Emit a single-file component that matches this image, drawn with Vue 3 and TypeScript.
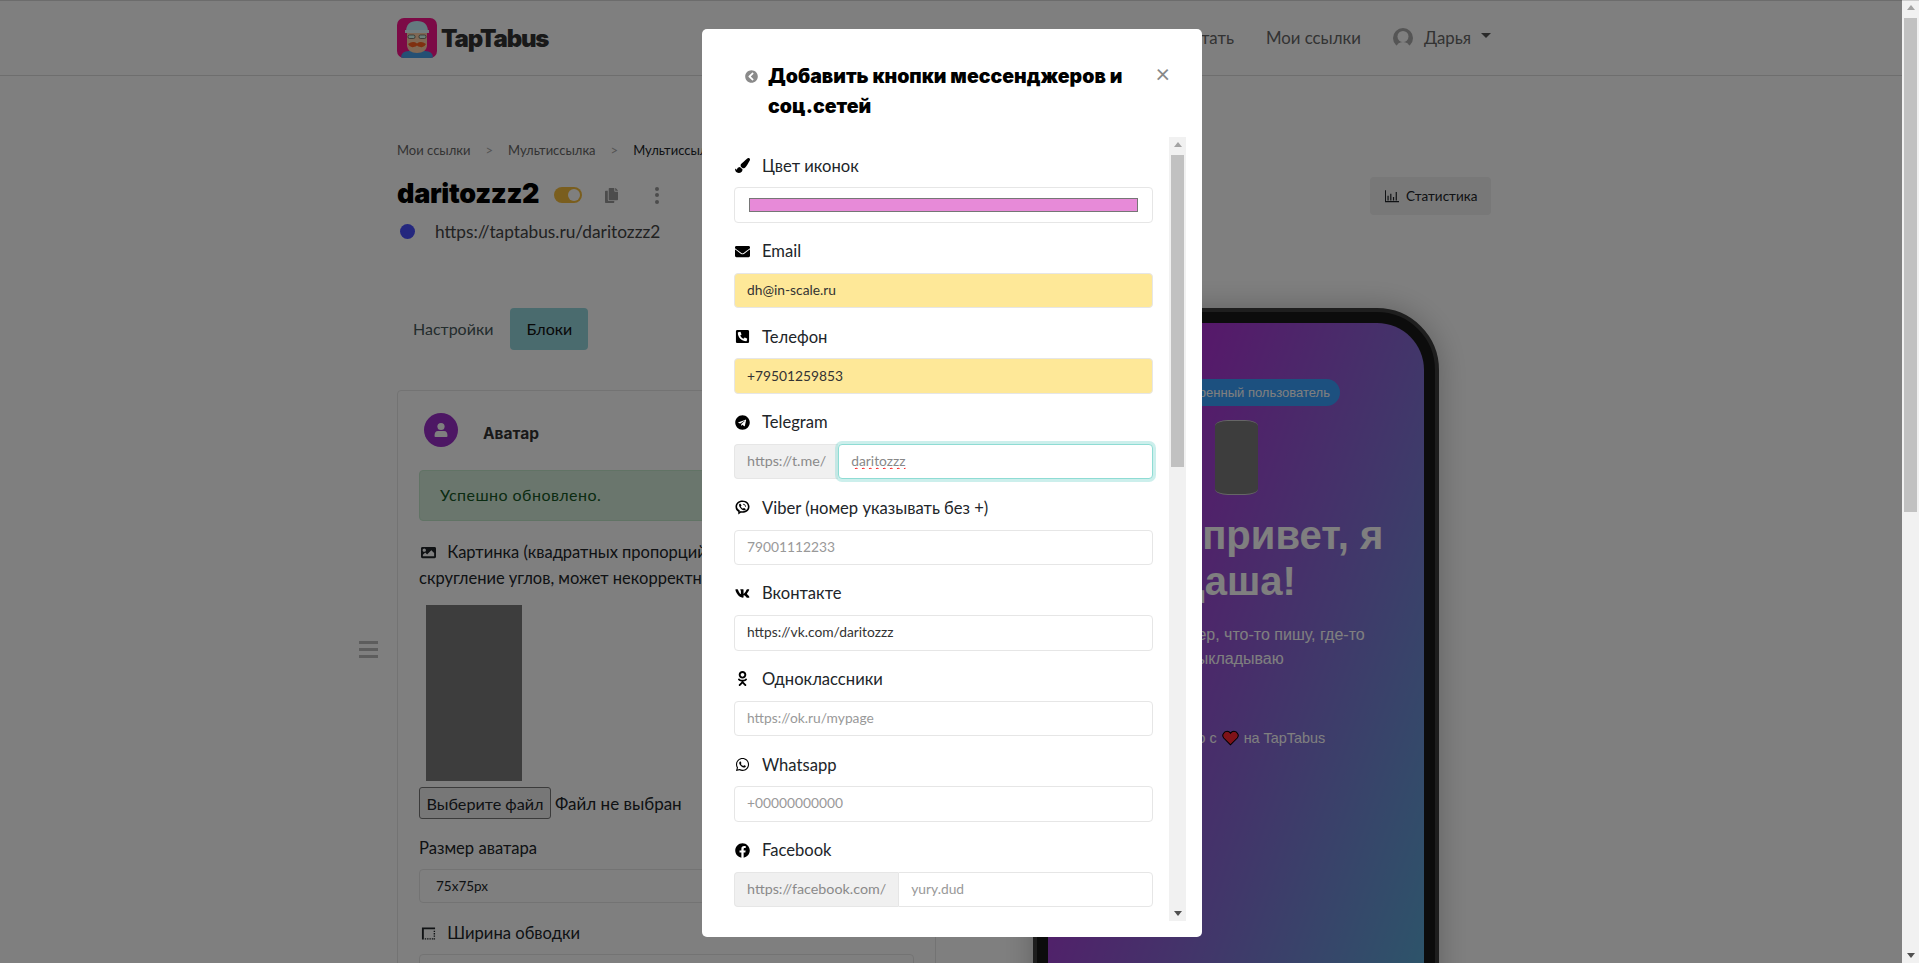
<script setup lang="ts">
const icons: Record<string, { box: string; d: string }> = {
  brush: {
    box: '0 0 512 512',
    d: 'M167.02 309.34c-40.12 2.58-76.53 17.86-97.19 72.3-2.35 6.21-8 9.98-14.59 9.98-11.11 0-45.46-27.67-55.25-34.35C0 439.62 37.93 512 128 512c75.86 0 128-43.77 128-120.19 0-3.11-.65-6.08-.97-9.13l-88.01-73.34zM457.89 0c-15.16 0-29.37 6.71-40.21 16.45C213.27 199.05 192 203.34 192 257.09c0 13.7 3.25 26.76 8.73 38.7l63.82 53.18c7.21 1.8 14.64 3.03 22.39 3.03 62.11 0 98.11-45.47 211.16-256.46 7.38-14.35 13.9-29.85 13.9-45.99C512 20.64 486 0 457.89 0z',
  },
  mail: {
    box: '0 0 512 512',
    d: 'M502.3 190.8c3.9-3.1 9.7-.2 9.7 4.7V400c0 26.5-21.5 48-48 48H48c-26.5 0-48-21.5-48-48V195.6c0-5 5.7-7.8 9.7-4.7 22.4 17.4 52.1 39.5 154.1 113.6 21.1 15.4 56.7 47.8 92.2 47.6 35.7.3 72-32.8 92.3-47.6 102-74.1 131.6-96.3 154-113.7zM256 320c23.2.4 56.6-29.2 73.4-41.4 132.7-96.3 142.8-104.7 173.4-128.7 5.8-4.5 9.2-11.5 9.2-18.9v-19c0-26.5-21.5-48-48-48H48C21.5 64 0 85.5 0 112v19c0 7.4 3.4 14.3 9.2 18.9 30.6 23.9 40.7 32.4 173.4 128.7 16.8 12.2 50.2 41.8 73.4 41.4z',
  },
  phone: {
    box: '0 0 448 512',
    d: 'M400 32H48C21.49 32 0 53.49 0 80v352c0 26.51 21.49 48 48 48h352c26.51 0 48-21.49 48-48V80c0-26.51-21.49-48-48-48zM94 416c-7.033 0-13.057-4.873-14.616-11.627l-14.998-65a15 15 0 0 1 8.707-17.16l69.998-29.999a15 15 0 0 1 17.518 4.289l30.997 37.885c48.944-22.963 88.297-62.858 110.77-110.77l-37.886-30.997a15.001 15.001 0 0 1-4.289-17.518l30-69.998a15 15 0 0 1 17.16-8.707l65 14.998A14.997 14.997 0 0 1 384 126c0 160.292-129.945 290-290 290z',
  },
  telegram: {
    box: '0 0 496 512',
    d: 'M248 8C111 8 0 119 0 256s111 248 248 248 248-111 248-248S385 8 248 8zm121.8 169.9l-40.7 191.8c-3 13.6-11.1 16.9-22.4 10.5l-62-45.7-29.9 28.8c-3.3 3.3-6.1 6.1-12.5 6.1l4.4-63.1 114.9-103.8c5-4.4-1.1-6.9-7.7-2.5l-142 89.4-61.2-19.1c-13.3-4.2-13.6-13.3 2.8-19.7l239.1-92.2c11.1-4 20.8 2.7 17.2 19.5z',
  },
  viber: {
    box: '0 0 512 512',
    d: 'M256 16C118 16 16 104 16 232c0 78 38 136 96 170v94l86-62c18 3 38 4 58 4 138 0 240-88 240-206S394 16 256 16zm0 56c108 0 184 66 184 160s-76 150-184 150c-22 0-42-2-62-6l-34 24v-50c-54-26-88-70-88-118 0-94 76-160 184-160zm-84 60c-14 0-34 18-34 42 0 76 98 180 182 180 26 0 44-20 44-34 0-10-6-16-14-22l-36-22c-10-6-20-4-26 4l-14 18c-34-12-66-46-80-82l18-12c10-6 12-16 6-26l-22-36c-6-8-14-10-24-10zM272 124v28c44 2 74 34 76 78h28c-2-60-46-104-104-106z',
  },
  vk: {
    box: '0 0 576 512',
    d: 'M545 117.7c3.7-12.5 0-21.7-17.8-21.7h-58.9c-15 0-21.9 7.9-25.6 16.7-6.3 15.6-45.6 105-95 147.4-7.6 7.6-11 10-15.1 10-2 0-4.9-2.4-4.9-14.9V117.7c0-15-4.2-21.7-16.6-21.7h-92.6c-9.4 0-15 7-15 13.5 0 14.2 21.2 17.5 23.4 57.5v86.8c0 19-3.4 22.5-10.9 22.5-20 0-68.6-73.4-97.4-157.4-5.8-16.3-11.5-22.9-26.6-22.9H34.8C18 96 14.6 103.9 14.6 112.7c0 15.6 20 93.1 93.1 195.5C156.4 378.1 225 416 287.4 416c37.5 0 42.1-8.4 42.1-22.9 0-66.8-3.4-73.1 15.4-73.1 8.7 0 23.7 4.4 58.7 38.1 40 40 46.6 57.9 69 57.9h58.9c16.8 0 25.3-8.4 20.4-25-11.2-34.9-86.9-106.7-90.3-111.5-8.7-11.2-6.2-16.2 0-26.2.1-.1 72-101.3 79.4-135.6z',
  },
  ok: {
    box: '0 0 320 512',
    d: 'M275.1 334c-27.4 17.4-65.1 24.3-90 26.9l20.9 20.6 76.3 76.3c27.9 28.6-17.5 73.3-45.7 45.7-19.1-19.4-47.1-47.4-76.3-76.6L84 503.4c-28.2 27.5-73.6-17.6-45.4-45.7 19.4-19.4 47.1-47.4 76.3-76.3l20.6-20.6c-24.6-2.6-62.9-9.1-90.6-26.9-32.6-21-46.9-33.3-34.3-59 7.4-14.6 27.7-26.9 54.6-5.7 0 0 36.3 28.9 94.9 28.9s94.9-28.9 94.9-28.9c26.9-21.1 47.1-8.9 54.6 5.7 12.4 25.7-1.9 38-34.5 59.1zM30.3 129.7C30.3 58 88.6 0 160 0s129.7 58 129.7 129.7c0 71.4-58.3 129.4-129.7 129.4s-129.7-58-129.7-129.4zm66 0c0 35.1 28.6 63.7 63.7 63.7s63.7-28.6 63.7-63.7c0-35.4-28.6-64-63.7-64s-63.7 28.6-63.7 64z',
  },
  whatsapp: {
    box: '0 0 448 512',
    d: 'M380.9 97.1C339 55.1 283.2 32 223.9 32c-122.4 0-222 99.6-222 222 0 39.1 10.2 77.3 29.6 111L0 480l117.7-30.9c32.4 17.7 68.9 27 106.1 27h.1c122.3 0 224.1-99.6 224.1-222 0-59.3-25.2-115-67.1-157zm-157 341.6c-33.2 0-65.7-8.9-94-25.7l-6.7-4-69.8 18.3L72 359.2l-4.4-7c-18.5-29.4-28.2-63.3-28.2-98.2 0-101.7 82.8-184.5 184.6-184.5 49.3 0 95.6 19.2 130.4 54.1 34.8 34.9 56.2 81.2 56.1 130.5 0 101.8-84.9 184.6-186.6 184.6zm101.2-138.2c-5.5-2.8-32.8-16.2-37.9-18-5.1-1.9-8.8-2.8-12.5 2.8-3.7 5.6-14.3 18-17.6 21.8-3.2 3.7-6.5 4.2-12 1.4-32.6-16.3-54-29.1-75.5-66-5.7-9.8 5.7-9.1 16.3-30.3 1.8-3.7.9-6.9-.5-9.7-1.4-2.8-12.5-30.1-17.1-41.2-4.5-10.8-9.1-9.3-12.5-9.5-3.2-.2-6.9-.2-10.6-.2-3.7 0-9.7 1.4-14.8 6.9-5.1 5.6-19.4 19-19.4 46.3 0 27.3 19.9 53.7 22.6 57.4 2.8 3.7 39.1 59.7 94.8 83.8 35.2 15.2 49 16.5 66.6 13.9 10.7-1.6 32.8-13.4 37.4-26.4 4.6-13 4.6-24.1 3.2-26.4-1.3-2.5-5-3.9-10.5-6.6z',
  },
  facebook: {
    box: '0 0 512 512',
    d: 'M504 256C504 119 393 8 256 8S8 119 8 256c0 123.78 90.69 226.38 209.25 245V327.69h-63V256h63v-54.64c0-62.15 37-96.48 93.67-96.48 27.14 0 55.52 4.84 55.52 4.84v61h-31.28c-30.8 0-40.41 19.12-40.41 38.73V256h68.78l-11 71.69h-57.78V501C413.31 482.38 504 379.78 504 256z',
  },
  back: {
    box: '0 0 512 512',
    d: 'M256 504C119 504 8 393 8 256S119 8 256 8s248 111 248 248-111 248-248 248zM142.1 273l135.5 135.5c9.4 9.4 24.6 9.4 33.9 0l17-17c9.4-9.4 9.4-24.6 0-33.9L226.9 256l101.6-101.6c9.4-9.4 9.4-24.6 0-33.9l-17-17c-9.4-9.4-24.6-9.4-33.9 0L142.1 239c-9.4 9.4-9.4 24.6 0 34z',
  },
  image: {
    box: '0 0 512 512',
    d: 'M464 448H48c-26.51 0-48-21.49-48-48V112c0-26.51 21.49-48 48-48h416c26.51 0 48 21.49 48 48v288c0 26.51-21.49 48-48 48zM112 120c-30.928 0-56 25.072-56 56s25.072 56 56 56 56-25.072 56-56-25.072-56-56-56zM64 384h384V272l-87.515-87.515c-4.686-4.686-12.284-4.686-16.971 0L208 320l-55.515-55.515c-4.686-4.686-12.284-4.686-16.971 0L64 336v48z',
  },
  copy: {
    box: '0 0 448 512',
    d: 'M320 448v40c0 13.255-10.745 24-24 24H24c-13.255 0-24-10.745-24-24V120c0-13.255 10.745-24 24-24h72v296c0 30.879 25.121 56 56 56h168zm0-344V0H152c-13.255 0-24 10.745-24 24v368c0 13.255 10.745 24 24 24h272c13.255 0 24-10.745 24-24V128H344c-13.2 0-24-10.8-24-24zm120.971-31.029L375.029 7.029A24 24 0 0 0 358.059 0H352v96h96v-6.059a24 24 0 0 0-7.029-16.97z',
  },
  chart: {
    box: '0 0 512 512',
    d: 'M0 440h512v40H0zM0 48h36v400H0zM90 250h44v170H90zM190 170h44v250h-44zM290 290h44v130h-44zM390 110h44v310h-44z',
  },
  borderStyle: {
    box: '0 0 448 512',
    d: 'M0 48h448v64H64v352H0zM96 416h48v48H96zM176 416h48v48h-48zM256 416h48v48h-48zM336 416h48v48h-48zM400 160h48v48h-48zM400 240h48v48h-48zM400 320h48v48h-48zM400 416h48v48h-48z',
  },
}

interface Field {
  icon: string
  label: string
  value?: string
  placeholder?: string
  prefix?: string
  filled?: boolean
  focused?: boolean
}

const fields: Field[] = [
  { icon: 'mail', label: 'Email', value: 'dh@in-scale.ru', filled: true },
  { icon: 'phone', label: 'Телефон', value: '+79501259853', filled: true },
  { icon: 'telegram', label: 'Telegram', value: 'daritozzz', prefix: 'https://t.me/', focused: true },
  { icon: 'viber', label: 'Viber (номер указывать без +)', placeholder: '79001112233' },
  { icon: 'vk', label: 'Вконтакте', value: 'https://vk.com/daritozzz' },
  { icon: 'ok', label: 'Одноклассники', placeholder: 'https://ok.ru/mypage' },
  { icon: 'whatsapp', label: 'Whatsapp', placeholder: '+00000000000' },
  { icon: 'facebook', label: 'Facebook', placeholder: 'yury.dud', prefix: 'https://facebook.com/' },
]
</script>

<template>
  <div class="screen">
    <div class="viewport">
      <header class="navbar">
        <div class="navbar-inner">
          <div class="brand">
            <svg class="logo" viewBox="0 0 40 40">
              <defs>
                <clipPath id="logo-clip"><rect width="40" height="40" rx="7" /></clipPath>
              </defs>
              <g clip-path="url(#logo-clip)">
                <rect width="40" height="40" fill="#f8148c" />
                <path d="M4 40q0-7 8-7h16q8 0 8 7z" fill="#48a0e8" />
                <path d="M10 14h20v14q-1 7-10 7t-10-7z" fill="#ffd0a8" />
                <path d="M9 14Q9 3 20 3t11 11z" fill="#c8f4ff" />
                <rect x="8" y="12" width="24" height="3" fill="#e4fbff" />
                <rect x="11" y="17" width="7" height="3.500" rx="1.500" fill="#d8fff0" stroke="#333" stroke-width=".6" />
                <rect x="22" y="17" width="7" height="3.500" rx="1.500" fill="#d8fff0" stroke="#333" stroke-width=".6" />
                <path d="M11 26q5-3.500 9-.5 4-3 9 .5-2 4-5.500 3-2.500-.5-3.500-1.500-1 1-3.500 1.500-3.500 1-5.500-3z" fill="#ff6020" />
              </g>
            </svg>
            <span class="brand-name">TapTabus</span>
          </div>
          <nav class="nav">
            <span>Как работать</span>
            <span>Мои ссылки</span>
            <span class="nav-user">
              <svg class="nav-avatar" viewBox="0 0 20 20">
                <circle cx="10" cy="10" r="10" fill="#aaa" />
                <circle cx="10" cy="8.500" r="5.500" fill="#fff" />
                <path d="M3 20q1-6 7-6t7 6z" fill="#fff" />
              </svg>
              Дарья
              <i class="caret"></i>
            </span>
          </nav>
        </div>
      </header>

      <main class="container">
        <div class="crumbs">
          <span>Мои ссылки</span>
          <b>&gt;</b>
          <span>Мультиссылка</span>
          <b>&gt;</b>
          <span class="crumb-current">Мультиссылка daritozzz2</span>
        </div>

        <div class="head">
          <div class="head-left">
            <h1>daritozzz2</h1>
            <span class="toggle"><i></i></span>
            <svg class="copy-icon" :viewBox="icons.copy.box"><path :d="icons.copy.d" /></svg>
            <span class="dots"><i></i><i></i><i></i></span>
          </div>
          <button class="stat-btn">
            <svg :viewBox="icons.chart.box"><path :d="icons.chart.d" /></svg>
            Статистика
          </button>
        </div>

        <div class="url-row">
          <i class="status-dot"></i>
          <span>https://taptabus.ru/daritozzz2</span>
        </div>

        <div class="columns">
          <section class="left-col">
            <div class="tabs">
              <span class="tab">Настройки</span>
              <span class="tab tab-active">Блоки</span>
            </div>

            <div class="card">
              <div class="card-title">
                <span class="card-avatar">
                  <svg viewBox="0 0 20 20">
                    <circle cx="10" cy="6.500" r="3.600" />
                    <path d="M3.500 16q0-5 3.500-5h6q3.500 0 3.500 5 0 1-1 1H4.500q-1 0-1-1z" />
                  </svg>
                </span>
                <strong>Аватар</strong>
              </div>

              <div class="alert">Успешно обновлено.</div>

              <p class="avatar-label">
                <svg class="line-icon" :viewBox="icons.image.box"><path :d="icons.image.d" /></svg>
                Картинка (квадратных пропорций, иначе при включении<br />
                скругление углов, может некорректно отображаться)
              </p>

              <div class="preview"></div>

              <div class="file-row">
                <button class="file-btn">Выберите файл</button>
                <span>Файл не выбран</span>
              </div>

              <div class="card-label">Размер аватара</div>
              <div class="fake-select">75x75px</div>

              <div class="card-label border-label">
                <svg class="line-icon" :viewBox="icons.borderStyle.box"><path :d="icons.borderStyle.d" /></svg>
                Ширина обводки
              </div>
              <div class="fake-select"></div>
            </div>

            <div class="menu-toggle"><i></i><i></i><i></i></div>
          </section>

          <aside class="phone">
            <div class="phone-screen">
              <span class="verified">Проверенный пользователь</span>
              <div class="phone-avatar"></div>
              <h2>Всем привет, я Даша!</h2>
              <p>Просто блогер, что-то пишу, где-то выкладываю</p>
              <div class="made">
                Сделано с
                <svg viewBox="0 0 20 18">
                  <path d="M10 17 2 9Q0 6.500 1.500 4 3 1 6 1q2.500 0 4 2.500Q11.500 1 14 1q3 0 4.500 3 1.500 2.500-.5 5z" fill="#ff2430" stroke="#000" stroke-width="1.200" />
                </svg>
                на TapTabus
              </div>
            </div>
          </aside>
        </div>
      </main>

      <div class="backdrop">
        <div class="modal">
          <div class="modal-head">
            <svg class="back-icon" :viewBox="icons.back.box"><path :d="icons.back.d" /></svg>
            <h3>Добавить кнопки мессенджеров и соц.сетей</h3>
            <span class="close">×</span>
          </div>
          <div class="modal-body">
            <form class="form">
              <div class="field">
                <label>
                  <span class="icon-box"><svg :viewBox="icons.brush.box"><path :d="icons.brush.d" /></svg></span>
                  Цвет иконок
                </label>
                <div class="color-box"><i></i></div>
              </div>
              <div v-for="f in fields" :key="f.label" class="field">
                <label>
                  <span class="icon-box" :class="`icon-${f.icon}`"><svg :viewBox="icons[f.icon].box"><path :d="icons[f.icon].d" /></svg></span>
                  {{ f.label }}
                </label>
                <div class="input-group">
                  <span v-if="f.prefix" class="prefix">{{ f.prefix }}</span>
                  <input
                    type="text"
                    :value="f.value"
                    :placeholder="f.placeholder"
                    :class="{ filled: f.filled, focused: f.focused }"
                  />
                </div>
              </div>
            </form>
            <div class="scrollbar inner-bar">
              <span class="arrow up"></span>
              <span class="thumb"></span>
              <span class="arrow down"></span>
            </div>
          </div>
        </div>
      </div>
    </div>

    <div class="scrollbar page-bar">
      <span class="arrow up"></span>
      <span class="thumb"></span>
      <span class="arrow down"></span>
    </div>

    <div class="top-line"></div>
  </div>
</template>

<style scoped>
.screen {
  position: relative;
  display: flex;
  height: 963px;
  overflow: hidden;
  font-family: Lato, 'Noto Sans', sans-serif;
  font-size: 16px;
  color: #212529;
}

.top-line {
  position: absolute;
  top: 0;
  left: 0;
  right: 0;
  height: 1px;
  background: rgba(0, 0, 0, 0.15);
}

.viewport {
  position: relative;
  flex: 1;
  min-width: 0;
  overflow: hidden;
  background: #fff;
}

/* navbar */
.navbar {
  height: 76px;
  border-bottom: 1px solid #ddd;
  box-sizing: border-box;
}

.navbar-inner {
  display: flex;
  justify-content: space-between;
  align-items: center;
  box-sizing: border-box;
  width: 1094px;
  height: 75px;
  margin-left: 397px;
  padding-top: 1px;
}

.brand {
  display: flex;
  align-items: center;
  gap: 4px;
}

.logo {
  width: 40px;
  height: 40px;
}

.brand-name {
  font-family: Inter, sans-serif;
  font-weight: 900;
  font-size: 24px;
  letter-spacing: -1.2px;
  color: #333;
}

.nav {
  display: flex;
  align-items: center;
  gap: 32px;
  margin-top: -2px;
  font-size: 16.8px;
  color: #666;
}

.nav-user {
  display: flex;
  align-items: center;
  gap: 11px;
}

.nav-avatar {
  width: 20px;
  height: 20px;
  margin-top: 2px;
}

.caret {
  width: 0;
  height: 0;
  border: 5.5px solid transparent;
  border-top-color: #555;
  border-bottom: 0;
  margin-top: -3px;
  margin-left: -1px;
}

/* page head */
.container {
  width: 1094px;
  margin-left: 397px;
  padding-top: 64px;
}

.crumbs {
  display: flex;
  align-items: center;
  gap: 15px;
  font-size: 13px;
  line-height: 21px;
  color: #666;
  white-space: nowrap;
}

.crumbs b {
  font-weight: 400;
  color: #aaa;
}

.crumb-current {
  color: #212529;
}

.head {
  display: flex;
  justify-content: space-between;
  align-items: center;
  margin-top: 14px;
  height: 40px;
}

.head-left {
  display: flex;
  align-items: center;
}

h1 {
  margin: -3px 0 0;
  font-family: Inter, sans-serif;
  font-weight: 900;
  font-size: 27px;
  letter-spacing: -0.3px;
  color: #000;
}

.toggle {
  display: flex;
  justify-content: flex-end;
  align-items: center;
  width: 28px;
  height: 16px;
  margin-left: 15px;
  padding: 0 2px;
  box-sizing: border-box;
  border-radius: 8px;
  background: #f5bd3d;
}

.toggle i {
  width: 12px;
  height: 12px;
  border-radius: 50%;
  background: #fff;
}

.copy-icon {
  width: 13px;
  height: 15px;
  margin-left: 23px;
  fill: #999;
}

.dots {
  display: flex;
  flex-direction: column;
  gap: 2.5px;
  margin-left: 37px;
}

.dots i {
  width: 4px;
  height: 4px;
  border-radius: 50%;
  background: #999;
}

.stat-btn {
  display: flex;
  align-items: center;
  gap: 7px;
  width: 121px;
  height: 38px;
  margin-top: 2px;
  padding: 0 0 0 15px;
  border: 0;
  border-radius: 4px;
  background: #f0f0f0;
  font: inherit;
  font-size: 13.5px;
  color: #212529;
}

.stat-btn svg {
  width: 14px;
  height: 14px;
  fill: #212529;
}

.url-row {
  display: flex;
  align-items: center;
  gap: 20px;
  margin-top: 3px;
  padding-left: 3px;
  height: 27px;
  font-size: 17.3px;
  color: #444;
}

.status-dot {
  width: 15px;
  height: 15px;
  border-radius: 50%;
  background: #484ffc;
}

/* columns */
.columns {
  display: flex;
  align-items: flex-start;
  gap: 97px;
  margin-top: 63px;
}

.left-col {
  position: relative;
  flex: none;
  width: 539px;
}

.tabs {
  display: flex;
  align-items: center;
  gap: 17px;
  padding-left: 16px;
  height: 42px;
  margin-bottom: 40px;
}

.tab {
  padding-bottom: 2px;
  color: #47585a;
}

.tab-active {
  display: flex;
  align-items: center;
  justify-content: center;
  box-sizing: border-box;
  width: 78px;
  height: 42px;
  border-radius: 4px;
  background: #95d6dc;
  color: #111;
}

.card {
  box-sizing: border-box;
  padding: 22px 21px 40px 21px;
  border: 1px solid #e6e6e6;
  border-radius: 4px;
}

.card-title {
  display: flex;
  align-items: center;
  gap: 25px;
  padding-left: 5px;
}

.card-avatar {
  display: flex;
  align-items: center;
  justify-content: center;
  width: 34px;
  height: 34px;
  border-radius: 50%;
  background: #9b2fc8;
}

.card-avatar svg {
  width: 20px;
  height: 20px;
  fill: #fff;
}

.card-title strong {
  font-family: Inter, sans-serif;
  font-weight: 700;
  font-size: 15.5px;
  color: #333;
  padding-top: 7px;
}

.alert {
  display: flex;
  align-items: center;
  height: 51px;
  margin-top: 23px;
  padding: 0 0 2px 20px;
  border-radius: 4px;
  background: #d4edda;
  border: 1px solid #c3e6cb;
  box-sizing: border-box;
  color: #155724;
  letter-spacing: 0.45px;
}

.avatar-label {
  margin: 18px 0 0;
  font-size: 16.5px;
  line-height: 26px;
  white-space: nowrap;
}

.line-icon {
  width: 15px;
  height: 15px;
  margin: 0 7px 0 2px;
  vertical-align: -2px;
  fill: #212529;
}

.preview {
  width: 96px;
  height: 176px;
  margin: 14px 0 0 7px;
  background: #7a7a7a;
}

.file-row {
  display: flex;
  align-items: center;
  gap: 4px;
  margin-top: 6px;
  font-size: 17px;
}

.file-btn {
  width: 132px;
  height: 32px;
  padding: 0;
  border: 1px solid #767676;
  border-radius: 3px;
  background: #efefef;
  font: inherit;
  font-size: 16.2px;
  color: #212529;
}

.card-label {
  margin: 17px 0 9px;
  font-size: 16.6px;
  line-height: 24px;
}

.border-label {
  margin-top: 18px;
}

.fake-select {
  box-sizing: border-box;
  height: 34px;
  padding-left: 16px;
  border: 1px solid #e6e6e6;
  border-radius: 4px;
  font-size: 13.5px;
  line-height: 32px;
}

.menu-toggle {
  position: absolute;
  left: -38px;
  top: 333px;
  display: flex;
  flex-direction: column;
  gap: 4px;
}

.menu-toggle i {
  width: 19px;
  height: 3px;
  background: #bbb;
}

/* phone */
.phone {
  flex: none;
  box-sizing: border-box;
  width: 406px;
  height: 800px;
  padding: 11px;
  border: 4px solid #3c3c3c;
  border-radius: 62px;
  background: #181818;
  box-shadow: 0 0 30px rgba(0, 0, 0, 0.25);
  font-family: 'Liberation Sans', Arial, sans-serif;
  color: #fff;
}

.phone-screen {
  display: flex;
  flex-direction: column;
  align-items: center;
  height: 100%;
  padding-top: 56px;
  border-radius: 47px;
  background: linear-gradient(110deg, #ca08d4 0%, #4ebad4 100%);
  text-align: center;
}

.verified {
  padding: 0 10px 0 29px;
  border-radius: 14px;
  height: 27px;
  line-height: 27px;
  background: #38a0ff;
  font-size: 13px;
}

.phone-avatar {
  box-sizing: border-box;
  width: 43px;
  height: 75px;
  margin-top: 14px;
  border: 1px solid #ccc;
  border-width: 1px 0;
  border-radius: 13px / 6px;
  background: #7a7a7a;
}

.phone h2 {
  width: 340px;
  margin: 17px 0 0;
  font-size: 40px;
  line-height: 46px;
  font-weight: 700;
}

.phone p {
  width: 270px;
  margin: 19px 0 0;
  line-height: 24px;
  font-size: 16px;
}

.made {
  display: flex;
  align-items: center;
  gap: 5px;
  margin-top: 59px;
  font-size: 14.4px;
}

.made svg {
  width: 17px;
  height: 16px;
}

/* modal */
.backdrop {
  position: absolute;
  inset: 0;
  background: rgba(0, 0, 0, 0.5);
}

.modal {
  box-sizing: border-box;
  width: 500px;
  height: 908px;
  margin: 29px 0 0 702px;
  padding-bottom: 16px;
  display: flex;
  flex-direction: column;
  border-radius: 5px;
  background: #fff;
}

.modal-head {
  display: flex;
  align-items: flex-start;
  flex: none;
  height: 108px;
  box-sizing: border-box;
  padding: 32px 32px 0 43px;
}

.back-icon {
  flex: none;
  width: 13px;
  height: 13px;
  margin: 9px 10px 0 0;
  fill: #8a8a8a;
}

.modal-head h3 {
  flex: 1;
  margin: 0;
  font-family: Inter, sans-serif;
  font-weight: 900;
  font-size: 19.5px;
  line-height: 30px;
  color: #000;
}

.close {
  flex: none;
  margin-top: -3px;
  font-size: 25px;
  line-height: 30px;
  color: #888;
}

.modal-body {
  flex: 1;
  min-height: 0;
  display: flex;
  margin: 0 16px;
}

.form {
  flex: 1;
  min-width: 0;
  padding: 16.5px 16px 0;
  overflow: hidden;
}

.field {
  margin-bottom: 16.4px;
}

.field label {
  display: flex;
  align-items: center;
  height: 24px;
  margin-bottom: 9.7px;
  font-size: 16.6px;
  color: #212529;
}

.icon-box {
  display: flex;
  justify-content: center;
  width: 16px;
  margin-right: 12px;
}

.icon-box svg {
  width: 15px;
  height: 15px;
  fill: #000;
}

.icon-phone svg {
  transform: scaleX(-1);
}

.icon-viber svg {
  fill-rule: evenodd;
}

.color-box {
  box-sizing: border-box;
  height: 35.5px;
  padding: 10px 14px;
  border: 1px solid #e6e6e6;
  border-radius: 4px;
}

.color-box i {
  display: block;
  height: 14px;
  box-sizing: border-box;
  border: 1px solid #767676;
  background: #e78ad8;
}

.input-group {
  display: flex;
  height: 35.5px;
}

.prefix {
  display: flex;
  align-items: center;
  padding: 0 12px 2px;
  border: 1px solid #e6e6e6;
  border-right: 0;
  border-radius: 4px 0 0 4px;
  background: #f0f0f0;
  font-size: 14.3px;
  color: #8a8a8a;
  white-space: nowrap;
}

input {
  flex: 1;
  min-width: 0;
  box-sizing: border-box;
  height: 100%;
  padding: 0 12px 2px;
  border: 1px solid #e6e6e6;
  border-radius: 4px;
  outline: 0;
  font: inherit;
  font-size: 13.8px;
  color: #333;
}

.prefix + input {
  border-radius: 0 4px 4px 0;
}

input::placeholder {
  color: #999;
}

input.filled {
  background: #fee898;
}

input.focused {
  position: relative;
  border-color: #8fdcd4;
  border-radius: 4px;
  box-shadow: 0 0 0 3px rgba(143, 220, 212, 0.45);
  color: #888;
  text-decoration: underline wavy #f00 1px;
}

/* classic scrollbars */
.scrollbar {
  flex: none;
  display: flex;
  flex-direction: column;
  align-items: center;
  box-sizing: border-box;
  width: 17px;
  background: #f1f1f1;
}

.thumb {
  display: block;
  width: 13px;
  background: #c1c1c1;
}

.arrow {
  flex: none;
  width: 0;
  height: 0;
  border: 4.5px solid transparent;
}

.arrow.up {
  margin: 5px 0 8px;
  border-top: 0;
  border-bottom: 5px solid #a3a3a3;
}

.arrow.down {
  margin: auto 0 5px;
  border-bottom: 0;
  border-top: 5px solid #505050;
}

.inner-bar .thumb {
  height: 312px;
}

.page-bar .thumb {
  height: 494px;
}
</style>

<style>
html,
body {
  margin: 0;
  overflow: hidden;
}
</style>
